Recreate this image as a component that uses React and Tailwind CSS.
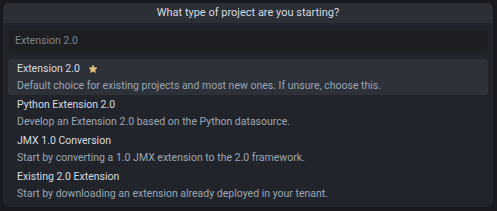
import React from 'react';

const items = [
    { title: 'Extension 2.0', desc: 'Default choice for existing projects and most new ones. If unsure, choose this.', star: true },
    { title: 'Python Extension 2.0', desc: 'Develop an Extension 2.0 based on the Python datasource.' },
    { title: 'JMX 1.0 Conversion', desc: 'Start by converting a 1.0 JMX extension to the 2.0 framework.' },
    { title: 'Existing 2.0 Extension', desc: 'Start by downloading an extension already deployed in your tenant.' },
];

const Star = () => (
    <svg width="10" height="10" viewBox="0 0 24 24" className="ml-[8px]">
        <path
            d="M12 2.5l2.9 6.1 6.6.8-4.9 4.6 1.3 6.6L12 17.3l-5.9 3.3 1.3-6.6-4.9-4.6 6.6-.8z"
            fill="#e5c07b"
            stroke="#e5c07b"
            strokeWidth="1.5"
            strokeLinejoin="round"
        />
    </svg>
);

export default function App() {
    return (
        <div className="w-[497px] h-[211px] bg-[#181a1f] p-[3px] pr-[4px] pb-[4px]" style={{ fontFamily: 'Roboto, "Open Sans", sans-serif' }}>
            <div className="h-full rounded-[6px] bg-[#21252b] overflow-hidden">
                {/* Title */}
                <div className="h-[20px] bg-[#2c2f36] flex items-center justify-center text-[11px] text-[#d7dae0]">
                    What type of project are you starting?
                </div>

                <div className="px-[5px] pt-[7px]">
                    {/* Input */}
                    <div className="h-[22px] bg-[#1d1f23] rounded-[2px] flex items-center px-[7px] text-[10.5px] text-[#7f848e]">
                        Extension 2.0
                    </div>

                    {/* List */}
                    <div className="mt-[7px]">
                        {items.map((item, idx) => (
                            <div
                                key={idx}
                                className={`h-[36px] px-[9px] rounded-[3px] flex flex-col justify-center ${idx === 0 ? 'bg-[#2c313a]' : ''}`}
                            >
                                <div className="flex items-center text-[10.5px] leading-[17px] text-[#d7dae0]">
                                    {item.title}
                                    {item.star && <Star />}
                                </div>
                                <div className="text-[10.5px] leading-[17px] text-[#9da5b4]">{item.desc}</div>
                            </div>
                        ))}
                    </div>
                </div>
            </div>
        </div>
    );
}
